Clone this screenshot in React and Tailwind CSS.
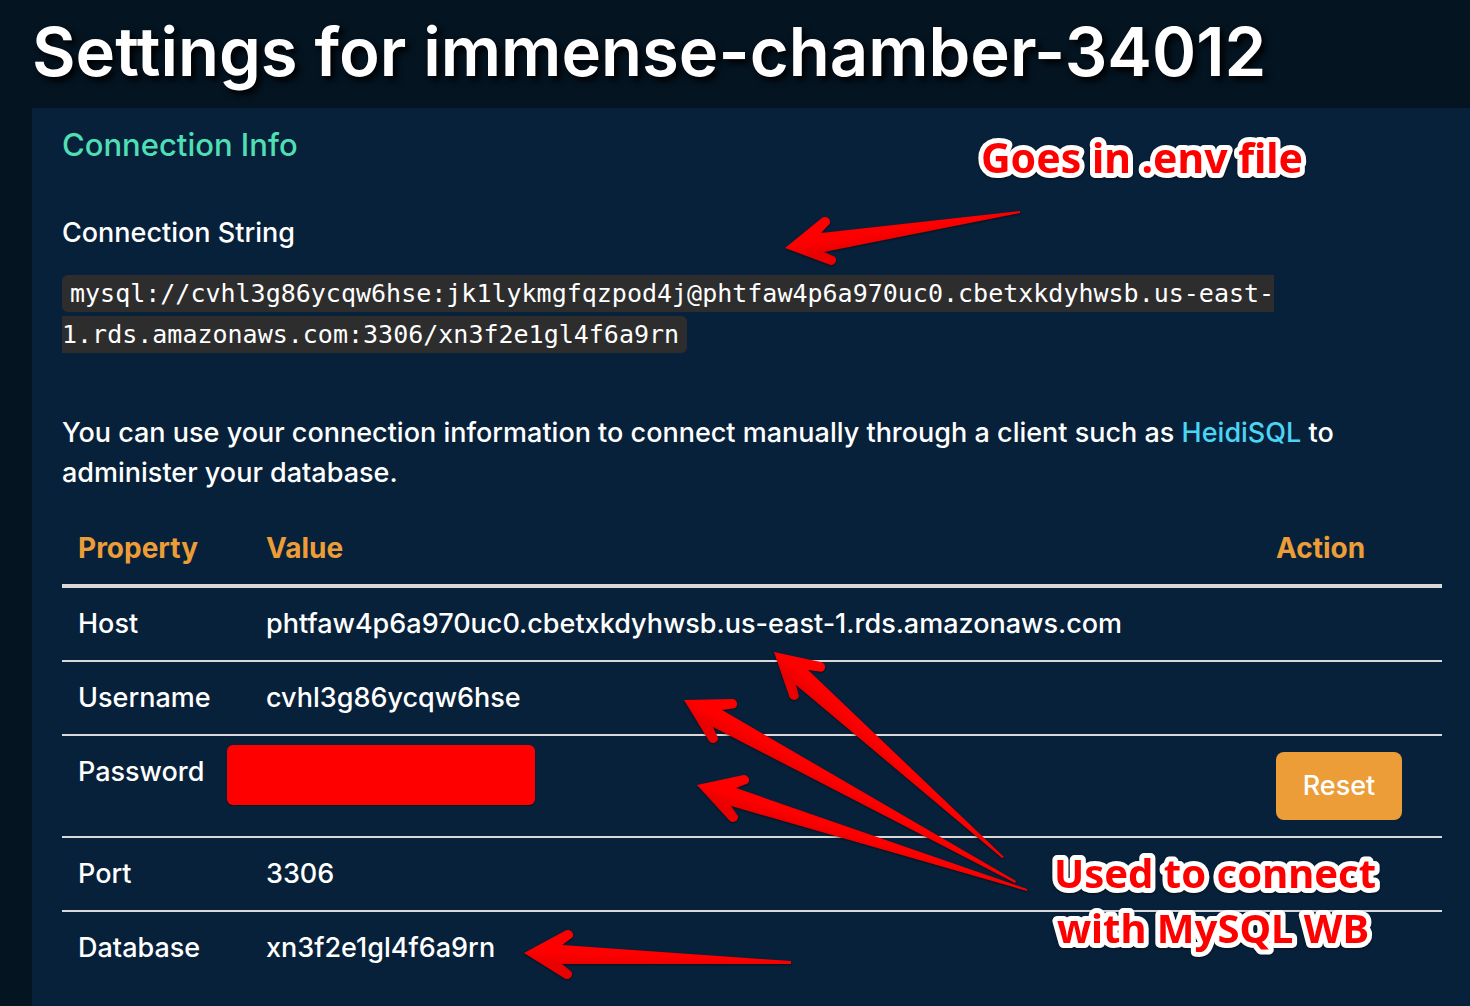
import React from "react";

const CAP = 5;

// Each arrow: tip, upper barb (cap centre + notch), tail (upper + lower), lower barb (notch + cap centre)
const ARROWS = [
  { id: "string", tip: [785, 248], capA: [825, 222], notchA: [821, 233], tail: [[1020, 211], [1020, 213]], notchB: [824, 252], capB: [831, 260] },
  { id: "host", tip: [774, 652], capA: [820, 667], notchA: [808, 670], tail: [[1004, 857], [1002, 858]], notchB: [796, 685], capB: [794, 695] },
  { id: "user", tip: [684, 700], capA: [732, 704], notchA: [722, 710], tail: [[1016, 881], [1015, 883]], notchB: [713, 727], capB: [713, 738] },
  { id: "password", tip: [697, 785], capA: [744, 780], notchA: [736, 788], tail: [[1027, 889], [1027, 891]], notchB: [731, 806], capB: [733, 817] },
  { id: "database", tip: [524, 953], capA: [568, 935], notchA: [562, 945], tail: [[791, 961], [791, 964]], notchB: [562, 964], capB: [567, 974] },
];

const NOTES = [
  { text: "Goes in .env file", x: 1142, y: 173, size: "text-[41px]" },
  { text: "Used to connect", x: 1215, y: 888, size: "text-[40px]" },
  { text: "with MySQL WB", x: 1213, y: 943, size: "text-[40px]" },
];

function side([ax, ay], [bx, by], sign) {
  const dx = bx - ax;
  const dy = by - ay;
  const len = Math.hypot(dx, dy);
  return [bx + (sign * dy * CAP) / len, by - (sign * dx * CAP) / len];
}

function arrowPath({ tip, capA, notchA, tail, notchB, capB }) {
  const arc = (p) => `A${CAP} ${CAP} 0 0 1 ${p}`;
  return [
    `M${tip}`,
    `L${side(tip, capA, 1)}`,
    arc(side(notchA, capA, -1)),
    `L${notchA}`,
    `L${tail[0]}`,
    `L${tail[1]}`,
    `L${notchB}`,
    `L${side(notchB, capB, 1)}`,
    arc(side(tip, capB, -1)),
    "Z",
  ].join(" ");
}

function Annotations() {
  return (
    <svg
      className="pointer-events-none absolute left-0 top-0 drop-shadow-[0_1px_1px_rgba(0,0,0,0.5)]"
      width="1470"
      height="1006"
      viewBox="0 0 1470 1006"
    >
      {ARROWS.map((a) => {
        const dx = a.tail[0][0] - a.tip[0];
        const dy = a.tail[0][1] - a.tip[1];
        const len = Math.hypot(dx, dy);
        const nx = (-dy / len) * 10;
        const ny = (dx / len) * 10;
        return (
          <g key={a.id}>
            <linearGradient
              id={`shade-${a.id}`}
              gradientUnits="userSpaceOnUse"
              x1={a.tip[0] - nx / 5}
              y1={a.tip[1] - ny / 5}
              x2={a.tip[0] + nx}
              y2={a.tip[1] + ny}
            >
              <stop offset="0" stopColor="#ff0000" />
              <stop offset="1" stopColor="#e90000" />
            </linearGradient>
            <path d={arrowPath(a)} fill={`url(#shade-${a.id})`} />
          </g>
        );
      })}
      {NOTES.map((n) => (
        <text
          key={n.text}
          x={n.x}
          y={n.y}
          textAnchor="middle"
          strokeLinejoin="round"
          className={`fill-[#ff0000] stroke-white stroke-10 font-['Noto_Sans','Open_Sans',sans-serif] font-bold [paint-order:stroke_fill] ${n.size}`}
        >
          {n.text}
        </text>
      ))}
    </svg>
  );
}

const ROWS = [
  { name: "Host", value: "phtfaw4p6a970uc0.cbetxkdyhwsb.us-east-1.rds.amazonaws.com" },
  { name: "Username", value: "cvhl3g86ycqw6hse" },
  { name: "Password", hidden: true },
  { name: "Port", value: "3306" },
  { name: "Database", value: "xn3f2e1gl4f6a9rn" },
];

export default function App() {
  return (
    <div className="relative min-h-screen overflow-hidden bg-[#041421] pl-8 font-['Inter',sans-serif] text-[27px] leading-10 font-medium text-white">
      <h1 className="h-[108px] whitespace-nowrap pt-3 text-[67px] leading-20 font-semibold [text-shadow:4px_4px_6px_#000]">
        Settings for immense-chamber-34012
      </h1>

      <main className="min-h-[898px] bg-[#08213a] pl-[30px] pr-7 pt-[17px]">
        <h2 className="mb-12 text-[31px] font-medium text-[#4fdfb4]">Connection Info</h2>
        <p className="mb-5">Connection String</p>
        <p className="mb-[58px]">
          <code className="rounded-md bg-[#2d2d2d] px-2 py-1 font-['DejaVu_Sans_Mono',monospace] text-[25px]">
            mysql://cvhl3g86ycqw6hse:jk1lykmgfqzpod4j@phtfaw4p6a970uc0.cbetxkdyhwsb.us-east-
            <wbr />
            1.rds.amazonaws.com:3306/xn3f2e1gl4f6a9rn
          </code>
        </p>
        <p className="mb-[19px]">
          You can use your connection information to connect manually through a client such as{" "}
          <a href="#heidisql" className="text-[#4bd5f5]">HeidiSQL</a> to administer your database.
        </p>

        <table className="w-full table-fixed border-separate border-spacing-0 text-left">
          <colgroup>
            <col className="w-[188px]" />
            <col />
            <col className="w-[182px]" />
          </colgroup>
          <thead className="text-[28px] text-[#ec9d38]">
            <tr>
              <th className="border-b-4 border-[#d9d9d9] p-4 font-bold">Property</th>
              <th className="border-b-4 border-[#d9d9d9] p-4 font-bold">Value</th>
              <th className="border-b-4 border-[#d9d9d9] p-4 font-bold">Action</th>
            </tr>
          </thead>
          <tbody className="[&>tr:not(:last-child)>td]:border-b-2 [&>tr>td]:border-[#d9d9d9] [&>tr>td]:p-4 [&>tr>td]:align-top">
            {ROWS.map((row) => (
              <tr key={row.name}>
                <td>{row.name}</td>
                <td className="relative">
                  {row.value}
                  {row.hidden && (
                    <span className="absolute -left-[23px] top-[9px] h-[60px] w-[308px] rounded-md bg-[#ff0000] shadow-[0_1px_1px_rgba(0,0,0,0.5)]" />
                  )}
                </td>
                <td>
                  {row.hidden && (
                    <button type="button" className="block h-17 w-[126px] rounded-lg bg-[#ec9d38]">
                      Reset
                    </button>
                  )}
                </td>
              </tr>
            ))}
          </tbody>
        </table>
      </main>

      <Annotations />
    </div>
  );
}
